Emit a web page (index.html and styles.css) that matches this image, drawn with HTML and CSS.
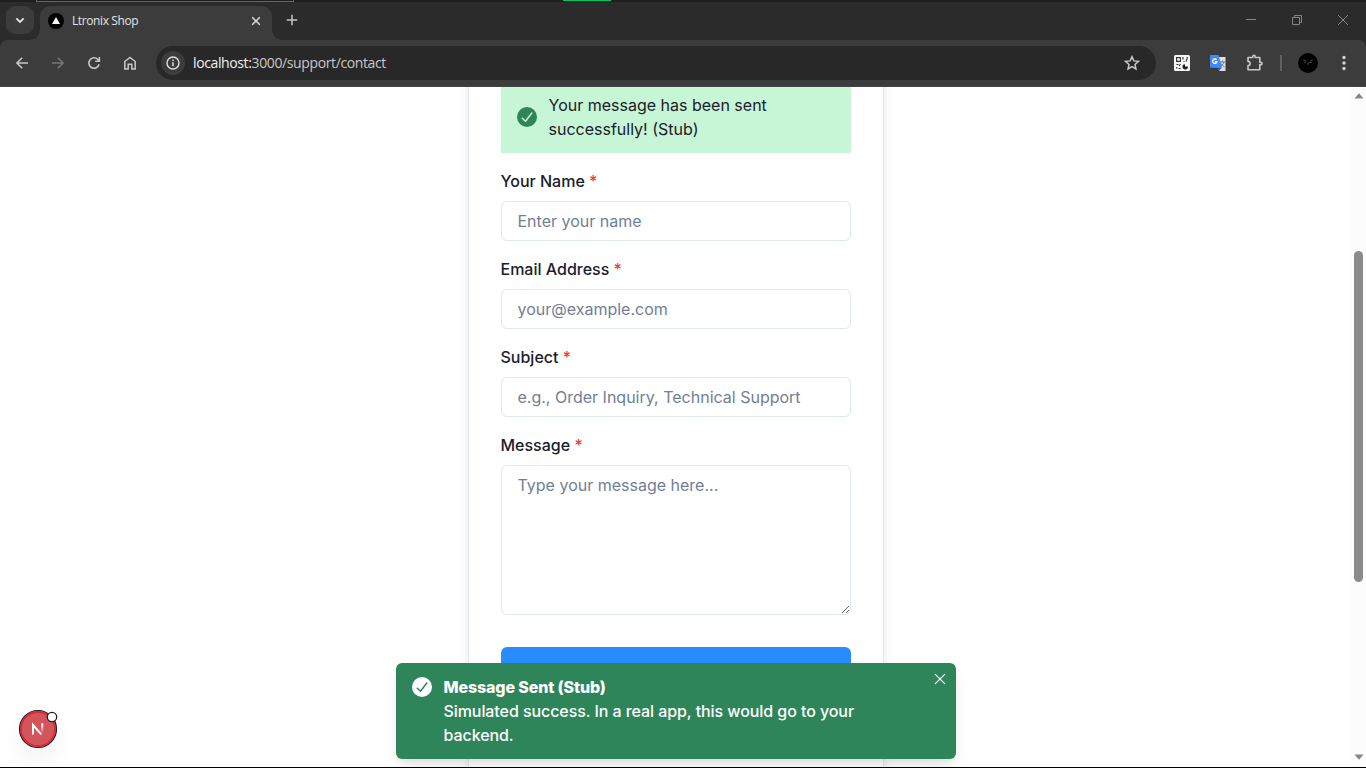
FILE: index.html
```html
<!DOCTYPE html>
<html lang="en">
<head>
<meta charset="utf-8">
<title>Ltronix Shop</title>
<link rel="stylesheet" href="styles.css">
</head>
<body>
<div class="window">
  <div class="top-edge"><span class="edge-outline"></span><span class="edge-green"></span></div>
  <header class="tabstrip">
    <div class="tab-search"><svg width="12" height="12" viewBox="0 0 12 12"><path d="M2.3 4.3 6 8l3.700-3.700" fill="none" stroke="#e3e3e3" stroke-width="1.8"/></svg></div>
    <div class="tab">
      <svg class="favicon" width="16" height="16" viewBox="0 0 16 16"><circle cx="8" cy="8" r="8" fill="#000"/><path d="M8 4 12 11H4z" fill="#fff"/></svg>
      <span class="tab-title">Ltronix Shop</span>
      <svg class="tab-close" width="10" height="10" viewBox="0 0 10 10"><path d="m1.200 1.200 7.600 7.600M8.800 1.200 1.200 8.800" stroke="#dedede" stroke-width="1.5"/></svg>
    </div>
    <svg class="new-tab" width="12" height="12" viewBox="0 0 12 12"><path d="M6 .8v10.400M.8 6h10.400" stroke="#c7c7c7" stroke-width="1.5"/></svg>
    <div class="window-controls">
      <svg width="12" height="12" viewBox="0 0 12 12"><path d="M1 5.500h10" stroke="#858585"/></svg>
      <svg width="12" height="12" viewBox="0 0 12 12"><path d="M1.500 3.500h7v7h-7zM3.500 3.500v-2h7v7h-2" fill="none" stroke="#858585"/></svg>
      <svg width="12" height="12" viewBox="0 0 12 12"><path d="m1 1 10 10M11 1 1 11" stroke="#858585"/></svg>
    </div>
  </header>
  <nav class="toolbar">
    <div class="nav-buttons">
      <svg width="16" height="16" viewBox="0 0 16 16"><path d="M14 8H3M8.200 2.700 2.900 8l5.300 5.300" fill="none" stroke="#c7c7c7" stroke-width="1.600"/></svg>
      <svg width="16" height="16" viewBox="0 0 16 16"><path d="M2 8h11M7.800 2.700 13.100 8l-5.300 5.300" fill="none" stroke="#777" stroke-width="1.600"/></svg>
      <svg width="16" height="16" viewBox="0 0 16 16"><path d="M13.100 9.200A5.200 5.200 0 1 1 11.900 4.500L13.400 6M13.400 2v4.200H9.200" fill="none" stroke="#c7c7c7" stroke-width="1.600"/></svg>
      <svg width="16" height="16" viewBox="0 0 16 16"><path d="M2.800 14V6.500L8 2.400l5.200 4.100V14H9.800V9.300H6.200V14z" fill="none" stroke="#c7c7c7" stroke-width="1.500"/></svg>
    </div>
    <div class="omnibox">
      <span class="site-info"><svg width="14" height="14" viewBox="0 0 14 14"><circle cx="7" cy="7" r="6" fill="none" stroke="#e0e0e0" stroke-width="1.400"/><path d="M7 6.300v4M7 3.500v1.600" stroke="#e0e0e0" stroke-width="1.500"/></svg></span>
      <span class="url"><span class="host">localhost:</span>3000/support/contact</span>
      <svg class="star" width="16" height="16" viewBox="0 0 16 16"><path d="m8 1.700 1.850 4.200 4.550.45-3.400 3.050.95 4.500L8 11.550 4.050 13.900 5 9.400 1.600 6.350l4.550-.45z" fill="none" stroke="#c7c7c7" stroke-width="1.500"/></svg>
    </div>
    <div class="extensions">
      <svg width="16" height="16" viewBox="0 0 16 16"><rect width="16" height="16" rx="1.500" fill="#f5f5f5"/><path d="M2.600 2.600h3.800v3.800H2.600zM9 2v2.500M9.500 6.500h1M13.200 2v1.500L12 6.500M2.500 9.500h2M6.500 9l-1.500 2M2.700 13.500V12M4.500 13.500h2.200" fill="none" stroke="#333" stroke-width="1.100"/><path d="M11 9.200v2.300h2.800A2.700 2.700 0 1 1 11 9.200z" fill="#222"/></svg>
      <svg width="16" height="16" viewBox="0 0 16 16"><path d="M6 2h9.500v14H9z" fill="#dedede"/><path d="M10 7h5M12.500 5.500V7M14 7c-.5 2-2 3.500-4 4.700M11 8.500c1 1.500 2 2.500 3.500 3.500" fill="none" stroke="#607d8b"/><path d="m7 12 5 .5L9 16z" fill="#3151c9"/><path d="M1 0h7.500L12 12.800H1a1 1 0 0 1-1-1V1a1 1 0 0 1 1-1z" fill="#4389f5"/><path d="M6.600 4.900A2.200 2.200 0 1 0 7 6.600H5" fill="none" stroke="#fff" stroke-width="1.300"/></svg>
      <svg width="18" height="18" viewBox="0 0 18 18"><path d="M2 3.500h4.800V2.400a1.200 1.200 0 0 1 2.400 0v1.100h4.600v4.700h1.100a1.200 1.200 0 0 1 0 2.400h-1.100v5.200H2v-4.200a2.100 2.100 0 0 0 0-4.200z" fill="none" stroke="#c7c7c7" stroke-width="1.600" stroke-linejoin="round"/></svg>
      <span class="divider"></span>
      <svg width="20" height="20" viewBox="0 0 20 20"><circle cx="10" cy="10" r="10" fill="#020202"/><path d="m5 7 3 1M6 9.500l2-.5M12 8l3-1M11 9.500h3M10 9v3" stroke="#4b4b4b" stroke-width=".9"/></svg>
      <svg width="4" height="16" viewBox="0 0 4 16"><g fill="#d0d0d0"><circle cx="2" cy="2.500" r="1.700"/><circle cx="2" cy="8" r="1.700"/><circle cx="2" cy="13.500" r="1.700"/></g></svg>
    </div>
  </nav>
  <main class="page">
    <section class="content">
      <form class="card">
        <div class="alert">
          <svg width="20" height="20" viewBox="0 0 20 20"><circle cx="10" cy="10" r="10" fill="#2f855a"/><path d="m5.300 11.200 3.200 3L14.800 6" fill="none" stroke="#c6f6d5" stroke-width="1.500" stroke-linecap="round" stroke-linejoin="round"/></svg>
          <p>Your message has been sent successfully! (Stub)</p>
        </div>
        <div class="field"><label for="name">Your Name <span class="required">*</span></label><input id="name" placeholder="Enter your name"></div>
        <div class="field"><label for="email">Email Address <span class="required">*</span></label><input id="email" placeholder="your@example.com"></div>
        <div class="field"><label for="subject">Subject <span class="required">*</span></label><input id="subject" placeholder="e.g., Order Inquiry, Technical Support"></div>
        <div class="field"><label for="message">Message <span class="required">*</span></label><textarea id="message" placeholder="Type your message here..."></textarea></div>
        <button class="submit" type="button" aria-label="Send"></button>
      </form>
    </section>
    <div class="scrollbar">
      <svg width="10" height="6" viewBox="0 0 10 6"><path d="M5 .3 9.500 5.500H.5z" fill="#858585"/></svg>
      <span class="thumb"></span>
      <svg class="down" width="10" height="6" viewBox="0 0 10 6"><path d="M5 5.700.5.500h9z" fill="#858585"/></svg>
    </div>
    <div class="toast">
      <svg class="toast-icon" width="20" height="20" viewBox="0 0 20 20"><circle cx="10" cy="10" r="10" fill="#fff"/><path d="m5.300 11.200 3.200 3L14.800 6" fill="none" stroke="#2f855a" stroke-width="1.500" stroke-linecap="round" stroke-linejoin="round"/></svg>
      <div class="toast-body"><strong>Message Sent (Stub)</strong><p>Simulated success. In a real app, this would go to your backend.</p></div>
      <svg class="toast-close" width="12" height="12" viewBox="0 0 12 12"><path d="m1.300 1.300 9.400 9.400M10.700 1.300 1.300 10.700" stroke="#fff" stroke-width="1.200" stroke-linecap="round"/></svg>
    </div>
    <div class="dev-badge">
      <svg width="40" height="40" viewBox="0 0 40 40"><defs><linearGradient id="diag" x1="15" y1="16" x2="25" y2="27" gradientUnits="userSpaceOnUse"><stop offset=".7" stop-color="#fff"/><stop offset="1" stop-color="#fff" stop-opacity=".2"/></linearGradient><linearGradient id="stem" x1="0" y1="14" x2="0" y2="24" gradientUnits="userSpaceOnUse"><stop offset=".2" stop-color="#fff"/><stop offset="1" stop-color="#fff" stop-opacity="0"/></linearGradient></defs><circle cx="20" cy="20" r="18.500" fill="#d4545b" stroke="#202020" stroke-width="1.200"/><circle cx="20" cy="20" r="17" fill="none" stroke="#d22c36" stroke-width="1.800"/><path d="M15 25.500V16l8.500 9.700" fill="none" stroke="url(#diag)" stroke-width="2"/><path d="M24.300 14.300V23" stroke="url(#stem)" stroke-width="2"/><circle cx="34" cy="8" r="4.700" fill="#fff" stroke="#202020" stroke-width="1.300"/></svg>
    </div>
  </main>
  <div class="bottom-edge"></div>
</div>
</body>
</html>
```
FILE: styles.css
```css
* { box-sizing: border-box; }
body { margin: 0; background: #000; font-family: Inter, sans-serif; }
svg { display: block; flex: none; }
p { margin: 0; }
.window { width: 1366px; height: 768px; display: flex; flex-direction: column; overflow: hidden; background: #2b2b2b; }
.top-edge { height: 2px; display: flex; background: #1e1e1e; flex: none; }
.edge-outline { width: 258px; margin-left: 36px; border: solid #656565; border-width: 0 1px 1px; }
.edge-green { width: 48px; height: 1px; margin-left: 269px; background: #00c46a; }
.tabstrip { height: 38px; flex: none; display: flex; align-items: center; padding-left: 6px; font-family: "Open Sans", sans-serif; }
.tab-search { width: 28px; height: 28px; border-radius: 9px; background: #3c3c3c; display: grid; place-items: center; margin-top: -2px; }
.tab { position: relative; width: 232px; height: 34px; margin: 4px 0 0 6px; padding: 0 11px 4px 8px; border-radius: 10px 10px 0 0; background: #3c3c3c; display: flex; align-items: center; }
.tab::before, .tab::after { content: ""; position: absolute; bottom: 0; width: 10px; height: 10px; }
.tab::before { left: -10px; background: radial-gradient(circle at 0 0, transparent 9.5px, #3c3c3c 10px); }
.tab::after { right: -10px; background: radial-gradient(circle at 100% 0, transparent 9.5px, #3c3c3c 10px); }
.tab-title { margin-left: 8px; color: #e3e3e3; font-size: 12px; letter-spacing: -.4px; line-height: 16px; }
.tab-close { margin-left: auto; }
.new-tab { margin: -2px 0 0 14px; }
.window-controls { display: flex; gap: 34px; margin: -2px 17px 0 auto; }
.toolbar { height: 47px; flex: none; display: flex; align-items: center; padding: 0 20px 0 14px; background: #3c3c3c; border-radius: 8px 8px 0 0; border-bottom: 1px solid #454545; }
.nav-buttons { display: flex; gap: 20px; }
.omnibox { width: 1000px; height: 34px; margin-left: 18px; border-radius: 17px; background: #282828; display: flex; align-items: center; padding: 0 16px 0 5px; }
.site-info { width: 24px; height: 24px; border-radius: 50%; background: #3c3c3c; display: grid; place-items: center; }
.url { margin-left: 8px; color: #c7c7c7; font: 14px/20px "Open Sans", sans-serif; letter-spacing: -.38px; white-space: nowrap; }
.host { color: #f0f0f0; }
.star { margin-left: auto; }
.extensions { flex: 1; display: flex; align-items: center; padding-left: 18px; }
.extensions > :nth-child(2) { margin-left: 20px; }
.extensions > :nth-child(3) { margin-left: 20px; }
.extensions > :nth-child(5) { margin-left: 16px; }
.extensions > :nth-child(6) { margin-left: auto; }
.divider { width: 2px; height: 16px; margin-left: 16px; background: #606060; }
.page { position: relative; flex: 1; min-height: 0; display: flex; background: #fff; overflow: hidden; }
.content { flex: 1; display: flex; justify-content: center; align-items: flex-start; }
.card { width: 416px; height: 800px; margin-top: -40px; padding: 33px 32px 32px; border: 1px solid #e2e8f0; border-radius: 8px; background: #fff; box-shadow: 0 10px 15px -3px rgba(0,0,0,.1), 0 4px 6px -2px rgba(0,0,0,.05); display: flex; flex-direction: column; gap: 16px; font-size: 16px; line-height: 24px; color: #1a202c; }
.alert { display: flex; align-items: center; gap: 12px; padding: 12px 16px; background: #c6f6d5; flex: none; }
.field { display: flex; flex-direction: column; gap: 8px; }
label { font-weight: 500; }
.required { color: #e53e3e; }
input, textarea { display: block; width: 100%; margin: 0; border: 1px solid #e2e8f0; border-radius: 6px; padding: 0 16px; font: 16px/24px Inter, sans-serif; color: #1a202c; background: #fff; }
input { height: 40px; }
textarea { height: 150px; padding: 7px 16px; resize: vertical; }
::placeholder { color: #718096; opacity: 1; }
.submit { height: 48px; margin: 16px 0 0; border: 0; border-radius: 6px; background: #288cff; flex: none; }
.scrollbar { width: 15px; background: #fcfcfc; display: flex; flex-direction: column; align-items: center; padding: 6px 0 7px; }
.thumb { width: 9px; height: 331px; margin-top: 152px; border-radius: 5px; background: #8b8b8b; }
.down { margin-top: auto; }
.toast { position: absolute; left: 396px; bottom: 8px; width: 560px; height: 96px; padding: 12px 10px 12px 16px; display: flex; border-radius: 6px; background: #2f855a; color: #fff; font-size: 16px; font-weight: 500; line-height: 24px; box-shadow: 0 10px 15px -3px rgba(0,0,0,.1), 0 4px 6px -2px rgba(0,0,0,.05); }
.toast-icon { margin: 2px 11.5px 0 0; }
.toast-body { width: 440px; letter-spacing: -.075px; }
.toast-body strong { display: block; font-weight: 800; letter-spacing: -.13px; }
.toast-close { margin: -2px 0 0 auto; }
.dev-badge { position: absolute; left: 18px; bottom: 18px; border-radius: 50%; box-shadow: 0 12px 24px rgba(0,0,0,.05); }
.bottom-edge { height: 1px; flex: none; background: #000; }
```
